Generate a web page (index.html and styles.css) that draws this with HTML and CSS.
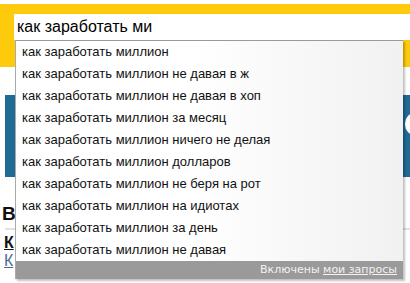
FILE: index.html
```html
<!DOCTYPE html>
<html lang="ru">
<head>
<meta charset="utf-8">
<link rel="stylesheet" href="styles.css">
</head>
<body>
<div class="page">
  <header class="head">
    <div class="search">как заработать ми</div>
  </header>
  <div class="banner"><span class="pill"></span></div>
  <h2 class="title">В</h2>
  <div class="rule"></div>
  <a class="strong-link">К</a>
  <a class="link">К</a>

  <div class="suggest">
    <ul class="items">
      <li>как заработать миллион</li>
      <li>как заработать миллион не давая в ж</li>
      <li>как заработать миллион не давая в хоп</li>
      <li>как заработать миллион за месяц</li>
      <li>как заработать миллион ничего не делая</li>
      <li>как заработать миллион долларов</li>
      <li>как заработать миллион не беря на рот</li>
      <li>как заработать миллион на идиотах</li>
      <li>как заработать миллион за день</li>
      <li>как заработать миллион не давая</li>
    </ul>
    <div class="foot">Включены <span class="u">мои запросы</span></div>
  </div>
</div>
</body>
</html>
```

FILE: styles.css
```css
html, body {
  margin: 0;
  padding: 0;
  background: #fff;
  overflow: hidden;
}
.page {
  position: relative;
  width: 410px;
  height: 283px;
  overflow: hidden;
  font-family: "Liberation Sans", Arial, sans-serif;
}
.head {
  margin-top: 4px;
  height: 63px;
  background: #fdcb0b;
  padding: 10px 0 0 14px;
  box-sizing: border-box;
}
.search {
  width: 420px;
  height: 26px;
  background: #fff;
  font-size: 16px;
  line-height: 26px;
  padding-left: 3px;
  color: #000;
  box-sizing: border-box;
}
.banner {
  position: relative;
  margin: 28px 0 0 5px;
  height: 82px;
  background: #1f6b93;
}
.pill {
  position: absolute;
  left: 400px;
  top: 18px;
  width: 20px;
  height: 22px;
  border-radius: 10px;
  background: #fff;
}
.title {
  margin: 28px 0 0 2px;
  font-size: 19px;
  line-height: 18px;
  font-weight: bold;
  color: #111;
}
.rule {
  margin: 5px 0 0 5px;
  height: 2px;
  background: #e2e2e2;
}
.strong-link {
  display: block;
  margin: 4px 0 0 4px;
  font-size: 16px;
  line-height: 17px;
  font-weight: bold;
  color: #111;
  text-decoration: underline;
}
.link {
  display: block;
  margin: 1px 0 0 4px;
  font-size: 16px;
  line-height: 17px;
  color: #4a6d95;
  text-decoration: underline;
}
.suggest {
  position: absolute;
  left: 15px;
  top: 40px;
  width: 388px;
  border-top: 1px solid #9a9a9a;
  border-left: 1px solid #aaa;
  box-sizing: border-box;
  background: linear-gradient(to right, #fff 45%, #f1f1f1 100%);
  box-shadow: 2px 2px 2px rgba(0, 0, 0, 0.25);
}
.items {
  list-style: none;
  margin: 0;
  padding: 0;
}
.items li {
  height: 22px;
  line-height: 22px;
  padding-left: 6px;
  font-size: 13px;
  color: #111;
  white-space: nowrap;
}
.foot {
  height: 18px;
  background: #9a9a9a;
  color: #f2f2f2;
  font-family: "DejaVu Sans", Verdana, sans-serif;
  font-size: 11px;
  line-height: 18px;
  text-align: right;
  padding-right: 6px;
}
.u {
  text-decoration: underline;
}
```
